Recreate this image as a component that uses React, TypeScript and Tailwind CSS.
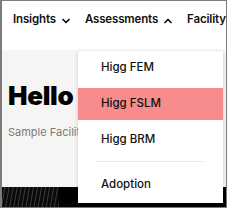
import React from 'react';

const ChevronDown = () => (
  <svg width="8" height="6" viewBox="0 0 8 6" fill="none" className="ml-[6px] mt-[1px]">
    <path d="M1 1.5L4 4.5L7 1.5" stroke="#111" strokeWidth="1.7" strokeLinecap="round" strokeLinejoin="round" />
  </svg>
);

const ChevronUp = () => (
  <svg width="8" height="6" viewBox="0 0 8 6" fill="none" className="ml-[6px] mt-[1px]">
    <path d="M1 4.5L4 1.5L7 4.5" stroke="#111" strokeWidth="1.7" strokeLinecap="round" strokeLinejoin="round" />
  </svg>
);

const items = ['Higg FEM', 'Higg FSLM', 'Higg BRM'];

const App = () => {
  return (
    <div
      className="relative w-[227px] h-[208px] overflow-hidden border border-l-2 border-[#7b7b7b] bg-white"
      style={{ fontFamily: 'Inter, "Noto Sans", sans-serif' }}
    >
      {/* Top nav */}
      <nav className="h-[49px] bg-white flex items-center gap-[15px] pl-[11px] whitespace-nowrap text-[11.5px] font-semibold text-[#111] pb-[11px] tracking-[-0.15px]">
        <div className="flex items-center">
          Insights
          <ChevronDown />
        </div>
        <div className="flex items-center">
          Assessments
          <ChevronUp />
        </div>
        <div className="flex items-center">Facility</div>
      </nav>

      {/* Hero */}
      <div className="h-[137px] bg-[#f6f5f3] px-[6px] pt-[33px]">
        <h1 className="text-[26px] leading-[26px] font-black text-black tracking-[-0.3px]">Hello</h1>
        <p className="mt-[15px] text-[11px] text-[#7a7a7a] whitespace-nowrap">Sample Facility</p>
      </div>

      {/* Dark band */}
      <div className="h-[20px] bg-black flex">
        <div className="w-[57px] h-full bg-[repeating-linear-gradient(100deg,#0a0a0a_0px,#0a0a0a_2px,#3a3a3a_3px,#0a0a0a_4px)]" />
      </div>

      {/* Dropdown */}
      <div className="absolute left-[76px] top-[50px] w-[145px] bg-white shadow-[0_1px_4px_rgba(0,0,0,0.18)] pt-[1px] pb-[2px] text-[11.5px] font-medium text-[#111]">
        <div className="flex flex-col gap-[4px]">
          {items.map((item) => (
            <div
              key={item}
              className={`h-8 flex items-center px-[23px] ${item === 'Higg FSLM' ? 'bg-[#f88b8b]' : ''}`}
            >
              {item}
            </div>
          ))}
        </div>
        <div className="mx-[19px] mt-[5px] mb-[7px] h-px bg-[#e8e8e8]" />
        <div className="h-8 flex items-center px-[23px]">Adoption</div>
      </div>
    </div>
  );
};

export default App;
